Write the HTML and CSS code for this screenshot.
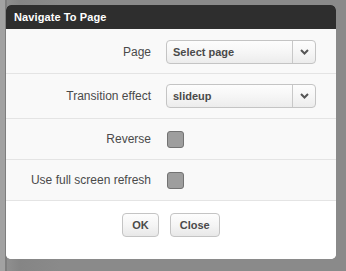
FILE: index.html
```html
<!DOCTYPE html>
<html lang="en">
    <head>
        <meta charset="UTF-8">
        <meta name="viewport" content="width=device-width, initial-scale=1.0">
        <title>Navigate To Page</title>
        <link rel="stylesheet" href="styles.css">
    </head>

    <body>
        <div class="backdrop">
            <div class="dialog">
                <div class="dialog-header">Navigate To Page</div>

                <div class="dialog-body">
                    <div class="row first">
                        <label class="label">Page</label>
                        <div class="select">
                            <span class="select-text">Select page</span>
                            <span class="select-arrow">
                                <svg width="9" height="6" viewBox="0 0 9 6"><path d="M1 1 L4.5 4.5 L8 1" fill="none" stroke="#555" stroke-width="2"/></svg>
                            </span>
                        </div>
                    </div>

                    <div class="row">
                        <label class="label">Transition effect</label>
                        <div class="select">
                            <span class="select-text">slideup</span>
                            <span class="select-arrow">
                                <svg width="9" height="6" viewBox="0 0 9 6"><path d="M1 1 L4.5 4.5 L8 1" fill="none" stroke="#555" stroke-width="2"/></svg>
                            </span>
                        </div>
                    </div>

                    <div class="row check-row">
                        <label class="label">Reverse</label>
                        <span class="checkbox"></span>
                    </div>

                    <div class="row check-row">
                        <label class="label">Use full screen refresh</label>
                        <span class="checkbox"></span>
                    </div>
                </div>

                <div class="dialog-footer">
                    <button class="btn">OK</button>
                    <button class="btn">Close</button>
                </div>
            </div>
        </div>
    </body>
</html>
```

FILE: styles.css
```css
body {
    margin: 0;
    height: 271px;
    overflow: hidden;
    font-family: "Liberation Sans", Arial, sans-serif;
    background-color: #8a8a8a;
    background-image: linear-gradient(to right, #a2a2a2 0, #a2a2a2 5px, #7e7e7e 5px, #7e7e7e 7px, #8f8f8f 7px, #858585 20px, #8a8a8a 60px);
}

.backdrop {
    padding: 5px 10px 0 6px;
}

.dialog {
    width: 330px;
    border-radius: 5px;
    background-color: #fff;
    overflow: hidden;
}

.dialog-header {
    height: 24px;
    line-height: 25px;
    padding-left: 8px;
    background-color: #2e2e2e;
    color: #fff;
    font-size: 11px;
    font-weight: bold;
    letter-spacing: 0.1px;
}

.dialog-body {
    background-color: #f9f9f9;
}

.row {
    display: flex;
    align-items: center;
    padding: 10px 0;
    height: 24px;
    border-bottom: 1px solid #e4e4e4;
}

.row.first {
    padding-top: 11px;
    padding-bottom: 9px;
}

.check-row {
    height: 20px;
}

.label {
    width: 145px;
    text-align: right;
    padding-right: 15px;
    font-size: 12px;
    color: #4a4a4a;
}

.select {
    display: flex;
    width: 148px;
    height: 22px;
    border: 1px solid #c4c4c4;
    border-radius: 4px;
    background: linear-gradient(to bottom, #fdfdfd 0%, #f6f6f6 50%, #ececec 100%);
}

.select-text {
    flex: 1;
    padding-left: 6px;
    line-height: 23px;
    font-size: 11px;
    font-weight: bold;
    color: #4a4a4a;
}

.select-arrow {
    display: flex;
    align-items: center;
    justify-content: center;
    width: 22px;
    border-left: 1px solid #c8c8c8;
}

.checkbox {
    width: 15px;
    height: 15px;
    margin-left: 1px;
    border: 1px solid #737373;
    border-radius: 3px;
    background-color: #9e9e9e;
}

.dialog-footer {
    display: flex;
    justify-content: center;
    gap: 11px;
    padding: 12px 0 22px;
    background-color: #fff;
}

.btn {
    height: 24px;
    padding: 0 9px;
    border: 1px solid #c4c4c4;
    border-radius: 4px;
    background: linear-gradient(to bottom, #fdfdfd 0%, #f5f5f5 50%, #e8e8e8 100%);
    font-family: "Liberation Sans", Arial, sans-serif;
    font-size: 11px;
    font-weight: bold;
    color: #4a4a4a;
}
```
